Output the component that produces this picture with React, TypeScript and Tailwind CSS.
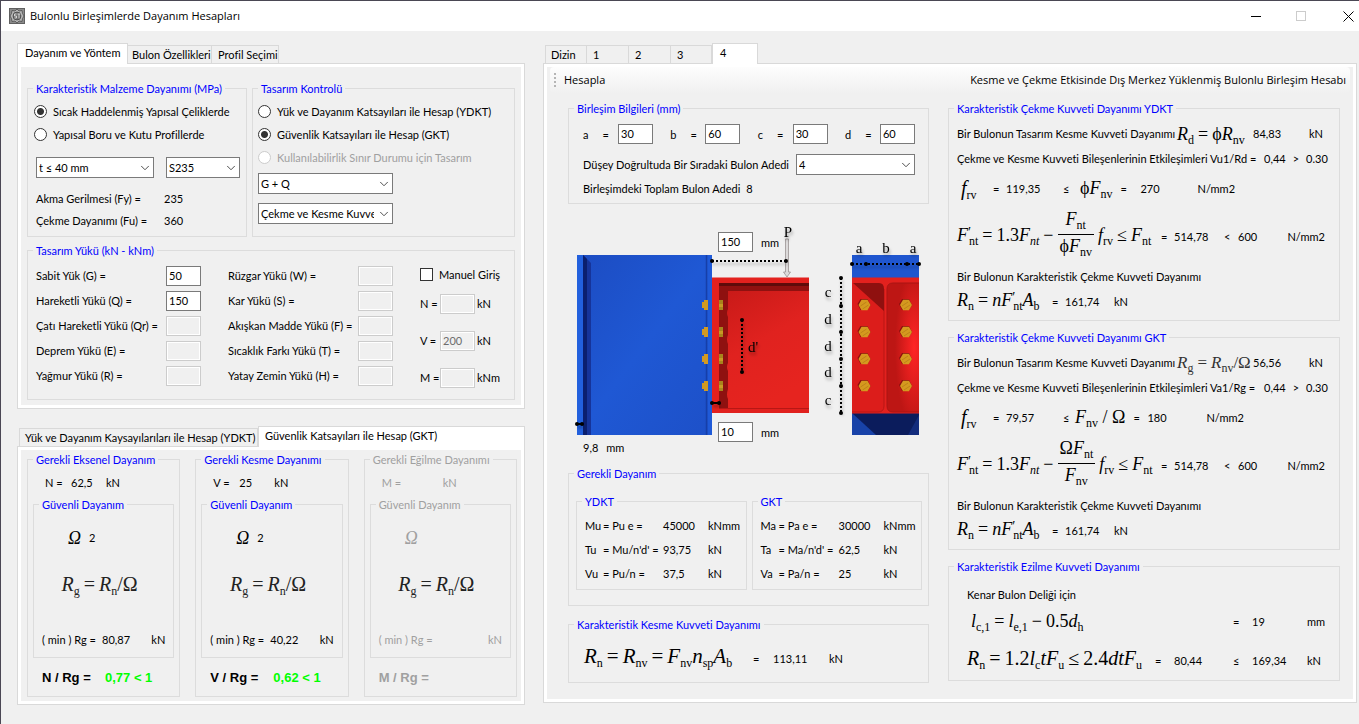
import { useState, type ReactNode } from "react";
import { ChevronDown } from "lucide-react";
import clsx from "clsx";

const loadsLeft = [
  { id: "g", label: "Sabit Yük (G) =", value: "50" },
  { id: "q", label: "Hareketli Yükü (Q) =", value: "150" },
  { id: "qr", label: "Çatı Hareketli Yükü (Qr) =", value: "" },
  { id: "e", label: "Deprem Yükü (E) =", value: "" },
  { id: "r", label: "Yağmur Yükü (R) =", value: "" },
];

const loadsRight = [
  { id: "w", label: "Rüzgar Yükü (W) =", value: "" },
  { id: "s", label: "Kar Yükü (S) =", value: "" },
  { id: "f", label: "Akışkan Madde Yükü (F) =", value: "" },
  { id: "t", label: "Sıcaklık Farkı Yükü (T) =", value: "" },
  { id: "h", label: "Yatay Zemin Yükü (H) =", value: "" },
];

const manualLoads = [
  { id: "n", label: "N =", value: "", unit: "kN" },
  { id: "v", label: "V =", value: "200", unit: "kN" },
  { id: "m", label: "M =", value: "", unit: "kNm" },
];

const strengthChecks = [
  { symbol: "N", title: "Gerekli Eksenel Dayanım", force: "62,5", omega: "2", rg: "80,87", ratio: "0,77 < 1" },
  { symbol: "V", title: "Gerekli Kesme Dayanımı", force: "25", omega: "2", rg: "40,22", ratio: "0,62 < 1" },
  { symbol: "M", title: "Gerekli Eğilme Dayanımı", force: "", omega: "", rg: "", ratio: "", disabled: true },
];

const boltLayout = [
  { id: "a", value: "30" },
  { id: "b", value: "60" },
  { id: "c", value: "30" },
  { id: "d", value: "60" },
];

const requiredYdkt = [
  ["Mu", "= Pu e =", "45000", "kNmm"],
  ["Tu", "= Mu/n'd' =", "93,75", "kN"],
  ["Vu", "= Pu/n =", "37,5", "kN"],
];

const requiredGkt = [
  ["Ma", "= Pa e =", "30000", "kNmm"],
  ["Ta", "= Ma/n'd' =", "62,5", "kN"],
  ["Va", "= Pa/n =", "25", "kN"],
];

function Group({ title, className, outer, disabled, children }: { title: string; className?: string; outer?: string; disabled?: boolean; children: ReactNode }) {
  return (
    <fieldset className={clsx("min-w-0 border border-[#dcdcdc]", disabled && "text-[#a0a0a0]", outer)}>
      <legend className={clsx("ml-[5px] px-[3px] leading-[13px] whitespace-nowrap", disabled ? "text-[#a0a0a0]" : "text-[#0000ff]")}>{title}</legend>
      <div className={className}>{children}</div>
    </fieldset>
  );
}

function TextInput({ id, value, disabled, label }: { id: string; value: string; disabled?: boolean; label?: string }) {
  return (
    <input
      id={id}
      type="text"
      aria-label={label}
      defaultValue={value}
      disabled={disabled}
      className={clsx(
        "h-5 w-[35px] shrink-0 border px-[2px] pb-px outline-none",
        disabled ? "border-[#cccccc] bg-[#f0f0f0] text-[#6d6d6d] ring-1 ring-white ring-inset" : "border-[#7a7a7a] bg-white"
      )}
    />
  );
}

function Select({ label, options, className }: { label: string; options: string[]; className?: string }) {
  return (
    <div className={clsx("relative", className)}>
      <select aria-label={label} className="h-[21px] w-full appearance-none border border-[#7a7a7a] bg-white pr-[18px] pb-px pl-[2px] outline-none">
        {options.map((option) => (
          <option key={option}>{option}</option>
        ))}
      </select>
      <ChevronDown className="pointer-events-none absolute top-1 right-[2px] h-3.5 w-3.5 text-[#444]" strokeWidth={1.6} />
    </div>
  );
}

function Radio({ name, label, checked, disabled }: { name: string; label: string; checked?: boolean; disabled?: boolean }) {
  return (
    <label className={clsx("flex h-[23px] items-center gap-1.5 whitespace-nowrap", disabled && "text-[#a0a0a0]")}>
      <input
        type="radio"
        name={name}
        defaultChecked={checked}
        disabled={disabled}
        className="h-[13px] w-[13px] shrink-0 appearance-none rounded-full border border-[#333] bg-white checked:bg-[radial-gradient(circle,#333_0,#333_3px,#fff_4px)] disabled:border-[#ccc]"
      />
      {label}
    </label>
  );
}

function LoadField({ id, label, value }: { id: string; label: string; value: string }) {
  return (
    <div className="flex h-[25px] items-center justify-between whitespace-nowrap">
      <label htmlFor={`load-${id}`}>{label}</label>
      <TextInput id={`load-${id}`} value={value} disabled={value === ""} />
    </div>
  );
}

function Tabs({ items, start }: { items: { label: string; className: string }[]; start: number }) {
  const [active, setActive] = useState(start);
  return (
    <div role="tablist" className="flex h-5 items-end">
      {items.map((item, index) => (
        <button
          key={item.label}
          role="tab"
          type="button"
          aria-selected={index === active}
          onClick={() => setActive(index)}
          className={clsx(
            "border-[#d9d9d9] text-left whitespace-nowrap",
            index === active ? "relative -mb-px h-[21px] border border-b-0 bg-white pb-[3px]" : "h-[18px] border-t border-r bg-[#f0f0f0] pb-px first:ml-0.5 first:border-l",
            item.className
          )}
        >
          {item.label}
        </button>
      ))}
    </div>
  );
}

function TabPage({ children }: { children: ReactNode }) {
  return (
    <div className="border border-[#d9d9d9] bg-white p-[3px]">
      <div className="bg-[#f0f0f0]">{children}</div>
    </div>
  );
}

function Formula({ children, className }: { children: ReactNode; className?: string }) {
  return (
    <span className={clsx("inline-flex items-center font-['Liberation_Serif',serif] leading-none whitespace-pre", className ?? "text-[20px]")}>
      {children}
    </span>
  );
}

function Op({ children }: { children: ReactNode }) {
  return <span className="mx-1">{children}</span>;
}

// variable with an upright subscript, optionally primed
function Var({ name, sub, prime, slanted }: { name: string; sub?: string; prime?: boolean; slanted?: boolean }) {
  return (
    <span className="relative">
      <i>{name}</i>
      {prime && <span className="absolute top-0.5 text-[14px] leading-[10px]">′</span>}
      {sub && <sub className={clsx("-bottom-1 text-[12px]", prime && "ml-px", slanted && "italic")}>{sub}</sub>}
    </span>
  );
}

function Fraction({ top, bottom }: { top: ReactNode; bottom: ReactNode }) {
  return (
    <span className="mr-1 inline-flex flex-col items-center">
      <span className="px-0.5 pb-1.5">{top}</span>
      <span className="w-full border-t border-black" />
      <span className="px-0.5 pt-0.5 pb-1">{bottom}</span>
    </span>
  );
}

function StrengthCheck({ symbol, title, force, omega, rg, ratio, disabled }: (typeof strengthChecks)[number]) {
  return (
    <Group title={title} disabled={disabled}>
      <div className="grid h-8 grid-cols-[26px_35px_1fr] items-center pl-[17px]">
        <span>{symbol} =</span>
        <span>{force}</span>
        <span>kN</span>
      </div>
      <Group title="Güvenli Dayanım" disabled={disabled} outer="mx-[5px]">
        <div className="flex h-[53px] items-center gap-2 pl-[34px]">
          <Formula className="text-[18px]"><i>Ω</i></Formula>
          <span>{omega}</span>
        </div>
        <div className="flex h-10 items-center justify-center pr-2 text-[#222]">
          <Formula>
            <Var name="R" sub="g" /><Op>=</Op><Var name="R" sub="n" />/Ω
          </Formula>
        </div>
        <div className="mt-[17px] grid h-9 grid-cols-[60px_1fr_auto] items-center pr-2 pl-2">
          <span className="whitespace-nowrap">( min ) Rg =</span>
          <span>{rg}</span>
          <span>kN</span>
        </div>
      </Group>
      <div className="grid h-[38px] grid-cols-[63px_1fr] items-center pl-3.5 font-['Liberation_Sans',sans-serif] font-bold">
        <span className="text-[13px]">{symbol} / Rg =</span>
        <span className="text-[13px] text-[#00ff00]">{ratio}</span>
      </div>
    </Group>
  );
}

function RequiredStrength({ title, rows }: { title: string; rows: string[][] }) {
  return (
    <Group title={title} className="pt-[5px] pb-1">
      <table className="w-full table-fixed text-left">
        <tbody>
          {rows.map(([name, expression, value, unit]) => (
            <tr key={name} className="h-6 whitespace-nowrap">
              <th className="w-[26px] pl-2 font-normal">{name}</th>
              <td className="w-[60px]">{expression}</td>
              <td className="w-[45px]">{value}</td>
              <td>{unit}</td>
            </tr>
          ))}
        </tbody>
      </table>
    </Group>
  );
}

function TensionGroup({ title, design, shear, ratioLabel, stress, limit, fraction }: {
  title: string;
  design: ReactNode;
  shear: string;
  ratioLabel: string;
  stress: string;
  limit: ReactNode;
  fraction: ReactNode;
}) {
  return (
    <Group title={title} className="pt-1.5 pr-2.5 pb-2 pl-2 whitespace-nowrap">
      <div className="grid h-[25px] grid-cols-[220px_76px_1fr] items-center">
        <span>Bir Bulonun Tasarım Kesme Kuvveti Dayanımı</span>
        <span className="flex items-center">{design}</span>
        <span className="grid grid-cols-[56px_auto]"><span>{shear}</span><span>kN</span></span>
      </div>
      <div className="grid h-[25px] grid-cols-[307px_1fr] items-center">
        <span>{ratioLabel}</span>
        <span className="flex gap-[7px]"><span>0,44</span><span>&gt;</span><span>0.30</span></span>
      </div>
      <div className="grid h-[34px] grid-cols-[32px_13px_57px_1fr] items-center pl-1">
        <Formula><Var name="f" sub="rv" /></Formula>
        <span>=</span>
        <span>{stress}</span>
        <span className="flex items-center">{limit}</span>
      </div>
      <div className="grid h-[59px] grid-cols-[204px_13px_50px_14px_1fr_auto] content-center items-baseline">
        <Formula className="text-[18px]">
          <Var name="F" sub="nt" prime /><Op>=</Op>1.3<Var name="F" sub="nt" slanted /><Op>−</Op>{fraction}<Var name="f" sub="rv" /><Op>≤</Op><Var name="F" sub="nt" />
        </Formula>
        <span>=</span>
        <span>514,78</span>
        <span>&lt;</span>
        <span>600</span>
        <span className="pr-1">N/mm2</span>
      </div>
      <div className="flex h-6 items-center">Bir Bulonun Karakteristik Çekme Kuvveti Dayanımı</div>
      <div className="grid h-6 grid-cols-[95px_13px_49px_1fr] content-center items-baseline">
        <Formula className="text-[18px]">
          <Var name="R" sub="n" /><Op>=</Op><Var name="n" /><Var name="F" sub="nt" prime /><Var name="A" sub="b" />
        </Formula>
        <span>=</span>
        <span>161,74</span>
        <span>kN</span>
      </div>
    </Group>
  );
}

const boltRows = [86, 113, 140, 167];

const dimensionDots = [
  [144, 42], [218, 42], [174, 101], [174, 153], [284, 45], [298, 45], [339, 45], [351, 45], [273, 59],
  [273, 87], [273, 113], [273, 140], [273, 167], [273, 194], [144, 184], [151, 184], [9, 205], [14, 205],
];

function ConnectionDrawing() {
  return (
    <svg viewBox="0 0 360 240" className="h-60 w-[360px] font-['Liberation_Serif',serif]" role="img" aria-label="Bulonlu birleşim">
      <defs>
        <linearGradient id="web" x1="0" y1="0" x2="1" y2="1">
          <stop offset="0" stopColor="#1c4cc2" />
          <stop offset="0.5" stopColor="#1f58d4" />
          <stop offset="1" stopColor="#1d50c8" />
        </linearGradient>
        <linearGradient id="beam" x1="0" y1="0" x2="0.4" y2="1">
          <stop offset="0" stopColor="#c91a18" />
          <stop offset="0.5" stopColor="#e0221f" />
          <stop offset="1" stopColor="#e6241f" />
        </linearGradient>
        <radialGradient id="pocket" cx="0.85" cy="0.5" r="0.6">
          <stop offset="0" stopColor="#ff2525" />
          <stop offset="1" stopColor="#bd1614" />
        </radialGradient>
        <filter id="soft" filterUnits="userSpaceOnUse" x="0" y="0" width="360" height="240">
          <feDropShadow dx="1" dy="3" stdDeviation="1.5" floodOpacity="0.35" />
        </filter>
      </defs>

      {/* column, seen from the side */}
      <rect x="9" y="36" width="135" height="180" fill="url(#web)" />
      <rect x="9" y="36" width="6" height="180" fill="#2260dd" />
      <path d="M15 36L23 44V216H15Z" fill="#16349a" />
      <path d="M15 36L19 40V216H15Z" fill="#0b1f6e" />
      <path d="M138.500 36V216" stroke="#163fa8" strokeWidth="1.500" />
      <rect x="140" y="36" width="4" height="180" fill="#1f5ad8" />

      {/* beam with its end plate */}
      <rect x="144" y="58.500" width="97" height="135.500" fill="#e3211e" />
      <rect x="151" y="64" width="90" height="129" fill="#8f1110" />
      <rect x="151" y="64" width="90" height="3" fill="#5f0b0a" />
      <path d="M160 72H241V189H160V180Q158 176 160 170V152Q158 148 160 144V125Q158 120 160 116V98Q158 94 160 90Z" fill="url(#beam)" />
      <rect x="151" y="189" width="90" height="5" fill="#e0211e" />
      <path d="M151 189.500H241" stroke="#b81715" />

      {boltRows.map((y) => (
        <g key={y}>
          <path d={`M134 ${y - 3}H136V${y - 5}H140V${y + 5}H136V${y + 3}H134Z`} fill="#d29a22" />
          <rect x="151" y={y - 5} width="4" height="10" fill="#a8841c" />
          <rect x="151" y={y - 1} width="4" height="3" fill="#c79a25" />
        </g>
      ))}

      {/* front view */}
      <rect x="284" y="36" width="67" height="23" fill="#1f56cf" />
      <rect x="284" y="194" width="67" height="22" fill="#0b1c5c" />
      <path d="M284 194L308 216H284Z" fill="#1842a8" />
      <path d="M351 196V216H340Z" fill="#132c7c" />
      <rect x="284" y="58.500" width="67" height="136" fill="#e3211e" />
      <path d="M284 64H311Q316 64 316 70V187Q316 193 310 193H284Z" fill="#dc1d1b" />
      <path d="M316 70V187Q316 193 310 193H284" fill="none" stroke="#b81715" />
      <path d="M285 64H311Q316 64 316 70V92Z" fill="#8f100f" />
      <path d="M351 64H325Q319 64 319 70V187Q319 193 325 193H351Z" fill="url(#pocket)" />
      <path d="M351 64H325Q319 64 319 70V187Q319 193 325 193H351" fill="none" stroke="#a91513" />
      {boltRows.map((y) =>
        [296.5, 338].map((x) => (
          <g key={x + "-" + y}>
            <path d={`M${x - 7} ${y - 1}l3-5h7l3 6l-3 5h-7z`} fill="#8a0f0e" />
            <path d={`M${x - 6} ${y}l3-5.200h6l3 5.200l-3 5.200h-6z`} fill="#d5991f" />
            <path d={`M${x - 4} ${y + 1}l6-4M${x - 2} ${y + 4}l6-4`} stroke="#b67c16" strokeWidth="0.800" />
          </g>
        ))
      )}

      {/* load arrow */}
      <path d="M217.500 20h3v33h2l-3.500 5l-3.500-5h2z" fill="#dcdada" stroke="#8f8888" strokeWidth="0.700" />

      <g stroke="#000" strokeWidth="2" filter="url(#soft)">
        <path d="M144 42H218" strokeDasharray="2 2" />
        <path d="M174 101V153" strokeDasharray="2 2" />
        <path d="M284 45H351" strokeDasharray="2 2" />
        <path d="M273 59V194" strokeDasharray="2 2" />
        <path d="M144 184H151M9 205H14" />
      </g>
      {dimensionDots.map(([x, y]) => (
        <circle key={x + "-" + y} cx={x} cy={y} r="2" />
      ))}
      <g fontSize="15" textAnchor="middle" filter="url(#soft)">
        <text x="220" y="18">P</text>
        <text x="185" y="133">d'</text>
        <text x="291" y="34">a</text>
        <text x="318" y="34">b</text>
        <text x="345" y="34">a</text>
        <text x="260" y="78">c</text>
        <text x="260" y="105">d</text>
        <text x="260" y="132">d</text>
        <text x="260" y="158">d</text>
        <text x="260" y="186">c</text>
      </g>
    </svg>
  );
}

function TitleBar() {
  return (
    <header className="flex h-[30px] items-center bg-white pl-2 font-['Open_Sans',sans-serif] text-[11px]">
      <svg viewBox="0 0 16 16" className="h-4 w-4">
        <rect width="16" height="16" fill="#606060" />
        <rect x="1" y="1" width="14" height="14" fill="#8a8a8a" />
        <path d="M8 1l2 2 3-.5.5 3L15 8l-1.500 2.500-.5 3-3-.5L8 15l-2-2-3 .5-.5-3L1 8l1.500-2.500.5-3 3 .5z" fill="#b5b5b5" stroke="#444" strokeWidth="0.700" />
        <circle cx="8" cy="8" r="4" fill="#6e6e6e" stroke="#333" strokeWidth="0.600" />
        <path d="M7.500 6H5.500v2h2v2h-2M8.500 6h3M10 6v4.500" fill="none" stroke="#ddd" strokeWidth="0.900" />
      </svg>
      <h1 className="ml-[5px] flex-1 pb-0.5">Bulonlu Birleşimlerde Dayanım Hesapları</h1>
      <button type="button" aria-label="Simge durumuna küçült" className="flex h-full w-[45px] items-center justify-center">
        <svg viewBox="0 0 11 11" className="h-[11px] w-[11px]"><path d="M0 5.500H10" stroke="#000" /></svg>
      </button>
      <button type="button" aria-label="Ekranı kapla" disabled className="flex h-full w-[45px] items-center justify-center">
        <svg viewBox="0 0 11 11" className="h-[11px] w-[11px]"><rect x="0.500" y="0.500" width="9" height="9" fill="none" stroke="#ccc" /></svg>
      </button>
      <button type="button" aria-label="Kapat" className="flex h-full w-[35px] items-center justify-end pr-[5px]">
        <svg viewBox="0 0 11 11" className="h-[11px] w-[11px]"><path d="M0.500 0.500L10.500 10.500M10.500 0.500L0.500 10.500" stroke="#000" /></svg>
      </button>
    </header>
  );
}

function StrengthPanel() {
  return (
    <TabPage>
      <div className="flex flex-col gap-[7px] px-1.5 pt-[15px] pb-[5px]">
        <div className="grid grid-cols-[220fr_263fr] gap-[5px]">
          <Group title="Karakteristik Malzeme Dayanımı (MPa)" className="pt-[5px] pr-1.5 pb-1 pl-2">
            <div className="-ml-0.5">
              <Radio name="material" label="Sıcak Haddelenmiş Yapısal Çeliklerde" checked />
              <Radio name="material" label="Yapısal Boru ve Kutu Profillerde" />
            </div>
            <div className="mt-[11px] mb-2.5 grid grid-cols-[118fr_74fr] gap-3">
              <Select label="Kalınlık" options={["t ≤ 40 mm"]} />
              <Select label="Çelik sınıfı" options={["S235"]} />
            </div>
            <div className="grid grid-cols-[128px_1fr] leading-[22px]">
              <span>Akma Gerilmesi (Fy) =</span>
              <span>235</span>
              <span>Çekme Dayanımı (Fu) =</span>
              <span>360</span>
            </div>
          </Group>
          <Group title="Tasarım Kontrolü" className="pt-[5px] pl-[5px]">
            <Radio name="method" label="Yük ve Dayanım Katsayıları ile Hesap (YDKT)" />
            <Radio name="method" label="Güvenlik Katsayıları ile Hesap (GKT)" checked />
            <Radio name="method" label="Kullanılabilirlik Sınır Durumu için Tasarım" disabled />
            <div className="mt-1 flex w-[135px] flex-col gap-[9px]">
              <Select label="Yük kombinasyonu" options={["G + Q"]} />
              <Select label="Kuvvet etkisi" options={["Çekme ve Kesme Kuvveti"]} />
            </div>
          </Group>
        </div>
        <Group title="Tasarım Yükü (kN - kNm)" className="pt-1.5 pb-[3px] pl-2">
          <div className="grid grid-cols-[165px_165px_auto] items-start gap-x-[27px]">
            <div>{loadsLeft.map((load) => <LoadField key={load.id} {...load} />)}</div>
            <div>{loadsRight.map((load) => <LoadField key={load.id} {...load} />)}</div>
            <div>
              <label className="flex h-[22px] items-center gap-1.5">
                <input type="checkbox" className="h-[13px] w-[13px] appearance-none border border-[#333] bg-white" />
                Manuel Giriş
              </label>
              {manualLoads.map((load) => (
                <div key={load.id} className="grid h-[37px] grid-cols-[20px_35px_auto] items-center whitespace-nowrap">
                  <label htmlFor={`manual-${load.id}`}>{load.label}</label>
                  <TextInput id={`manual-${load.id}`} value={load.value} disabled />
                  <span className="pl-0.5">{load.unit}</span>
                </div>
              ))}
            </div>
          </div>
        </Group>
      </div>
    </TabPage>
  );
}

function ConnectionPanel() {
  return (
    <TabPage>
      <div className="mx-[3px] flex h-[26px] items-center rounded-sm bg-linear-to-b from-[#fdfdfd] to-[#f0f0f0] pr-1 pl-1 font-['Open_Sans',sans-serif] text-[11px]">
        <span className="grid gap-[2px]">
          {[0, 1, 2, 3].map((dot) => <span key={dot} className="h-[2px] w-[2px] bg-[#b5b5b5]" />)}
        </span>
        <button type="button" className="ml-2 pb-0.5">Hesapla</button>
        <span className="ml-auto pb-0.5">Kesme ve Çekme Etkisinde Dış Merkez Yüklenmiş Bulonlu Birleşim Hesabı</span>
      </div>
      <div className="grid grid-cols-[361fr_392fr] gap-[19px] pt-[9px] pr-[13px] pb-4 pl-[21px]">
        <div className="flex flex-col">
          <Group title="Birleşim Bilgileri (mm)" className="pt-2 pr-[13px] pb-0.5 pl-3.5">
            <div className="flex h-[22px] items-center justify-between">
              {boltLayout.map(({ id, value }) => (
                <span key={id} className="flex items-center">
                  <label htmlFor={`bolt-${id}`} className="flex w-[35px] gap-3.5"><span>{id}</span><span>=</span></label>
                  <TextInput id={`bolt-${id}`} value={value} />
                </span>
              ))}
            </div>
            <div className="mt-[9px] flex items-center justify-between whitespace-nowrap">
              <span>Düşey Doğrultuda Bir Sıradaki Bulon Adedi</span>
              <Select label="Düşey Doğrultuda Bir Sıradaki Bulon Adedi" options={["4"]} className="w-[119px]" />
            </div>
            <div className="flex h-[26px] items-center gap-1.5"><span>Birleşimdeki Toplam Bulon Adedi</span><span>8</span></div>
          </Group>

          <div className="relative mt-[15px] mb-2 w-[360px]">
            <ConnectionDrawing />
            <div className="absolute top-[13px] left-[150px] flex items-center gap-2">
              <TextInput id="arm" value="150" label="P yükünün mesafesi" /><span>mm</span>
            </div>
            <div className="absolute top-[203px] left-[150px] flex items-center gap-2">
              <TextInput id="plate" value="10" label="Levha kalınlığı" /><span>mm</span>
            </div>
            <div className="absolute top-[222px] left-[15px] flex gap-2"><span>9,8</span><span>mm</span></div>
          </div>

          <Group title="Gerekli Dayanım" className="pt-[15px] pb-[15px]">
            <div className="grid grid-cols-2 gap-[5px] pr-1.5 pl-[7px]">
              <RequiredStrength title="YDKT" rows={requiredYdkt} />
              <RequiredStrength title="GKT" rows={requiredGkt} />
            </div>
          </Group>

          <Group title="Karakteristik Kesme Kuvveti Dayanımı" outer="mt-3">
            <div className="grid h-[51px] grid-cols-[169px_20px_56px_1fr] content-center items-baseline pl-[15px]">
              <Formula className="text-[21px]">
                <Var name="R" sub="n" /><Op>=</Op><Var name="R" sub="nv" /><Op>=</Op><Var name="F" sub="nv" /><Var name="n" sub="sp" /><Var name="A" sub="b" />
              </Formula>
              <span>=</span>
              <span>113,11</span>
              <span>kN</span>
            </div>
          </Group>
        </div>

        <div className="flex flex-col gap-2.5">
          <TensionGroup
            title="Karakteristik Çekme Kuvveti Dayanımı YDKT"
            design={<Formula className="text-[18px]"><Var name="R" sub="d" /><Op>=</Op>ϕ<Var name="R" sub="nv" /></Formula>}
            shear="84,83"
            ratioLabel="Çekme ve Kesme Kuvveti Bileşenlerinin Etkileşimleri Vu1/Rd ="
            stress="119,35"
            limit={
              <>
                <span className="w-[17px]">≤</span>
                <Formula className="text-[18px]">ϕ<Var name="F" sub="nv" /></Formula>
                <span className="w-7 pl-2">=</span><span className="w-[57px]">270</span><span>N/mm2</span>
              </>
            }
            fraction={<Fraction top={<Var name="F" sub="nt" />} bottom={<>ϕ<Var name="F" sub="nv" /></>} />}
          />
          <TensionGroup
            title="Karakteristik Çekme Kuvveti Dayanımı GKT"
            design={<Formula className="text-[17px] text-[#333]"><Var name="R" sub="g" /><Op>=</Op><Var name="R" sub="nv" />/Ω</Formula>}
            shear="56,56"
            ratioLabel="Çekme ve Kesme Kuvveti Bileşenlerinin Etkileşimleri Va1/Rg ="
            stress="79,57"
            limit={
              <>
                <span className="w-3">≤</span>
                <Formula className="text-[18px]"><Var name="F" sub="nv" /> / Ω</Formula>
                <span className="w-[22px] pl-2">=</span><span className="w-[59px]">180</span><span>N/mm2</span>
              </>
            }
            fraction={<Fraction top={<>Ω<Var name="F" sub="nt" /></>} bottom={<Var name="F" sub="nv" />} />}
          />
          <Group title="Karakteristik Ezilme Kuvveti Dayanımı" className="pt-[9px] pr-3.5 pb-1 pl-[18px]">
            <div className="flex h-6 items-center">Kenar Bulon Deliği için</div>
            <div className="grid h-[30px] grid-cols-[266px_19px_1fr_18px] items-center">
              <Formula className="pl-1 text-[18px]">
                <Var name="l" sub="c,1" /><Op>=</Op><Var name="l" sub="e,1" /><Op>−</Op>0.5<Var name="d" sub="h" />
              </Formula>
              <span>=</span>
              <span>19</span>
              <span>mm</span>
            </div>
            <div className="mt-1 grid h-9 grid-cols-[188px_19px_59px_19px_1fr_18px] content-center items-baseline">
              <Formula>
                <Var name="R" sub="n" /><Op>=</Op>1.2<Var name="l" sub="c" /><Var name="t" /><Var name="F" sub="u" /><Op>≤</Op>2.4<Var name="dt" /><Var name="F" sub="u" />
              </Formula>
              <span>=</span>
              <span>80,44</span>
              <span>≤</span>
              <span>169,34</span>
              <span>kN</span>
            </div>
          </Group>
        </div>
      </div>
    </TabPage>
  );
}

export default function App() {
  return (
    <div className="min-h-screen border-t border-b border-l border-[#4a4754] bg-[#f0f0f0] font-[Lato,sans-serif] text-[11px] leading-[13px] text-black [font-variant-ligatures:none]">
      <TitleBar />
      <main className="grid grid-cols-[508fr_814fr] gap-[18px] pt-3 pr-0.5 pb-[19px] pl-4">
        <div className="min-w-0">
          <Tabs
            start={0}
            items={[
              { label: "Dayanım ve Yöntem", className: "w-[111px] pl-[7px]" },
              { label: "Bulon Özellikleri", className: "w-[84px] pl-1" },
              { label: "Profil Seçimi", className: "w-[67px] pl-1.5" },
            ]}
          />
          <StrengthPanel />
          <div className="mt-[17px]">
            <Tabs
              start={1}
              items={[
                { label: "Yük ve Dayanım Kaysayılarıları ile Hesap (YDKT)", className: "w-[239px] pl-[5px]" },
                { label: "Güvenlik Katsayıları ile Hesap (GKT)", className: "flex-1 pl-1.5" },
              ]}
            />
            <TabPage>
              <div className="grid grid-cols-3 gap-[15px] pt-[3px] pr-1 pb-1 pl-1.5">
                {strengthChecks.map((check) => <StrengthCheck key={check.symbol} {...check} />)}
              </div>
            </TabPage>
          </div>
        </div>
        <div className="min-w-0">
          <Tabs
            start={4}
            items={[
              { label: "Dizin", className: "w-[42px] pl-[5px]" },
              { label: "1", className: "w-[42px] pl-1.5" },
              { label: "2", className: "w-[42px] pl-1.5" },
              { label: "3", className: "w-[41px] pl-1.5" },
              { label: "4", className: "w-[46px] pl-[7px]" },
            ]}
          />
          <ConnectionPanel />
        </div>
      </main>
    </div>
  );
}
